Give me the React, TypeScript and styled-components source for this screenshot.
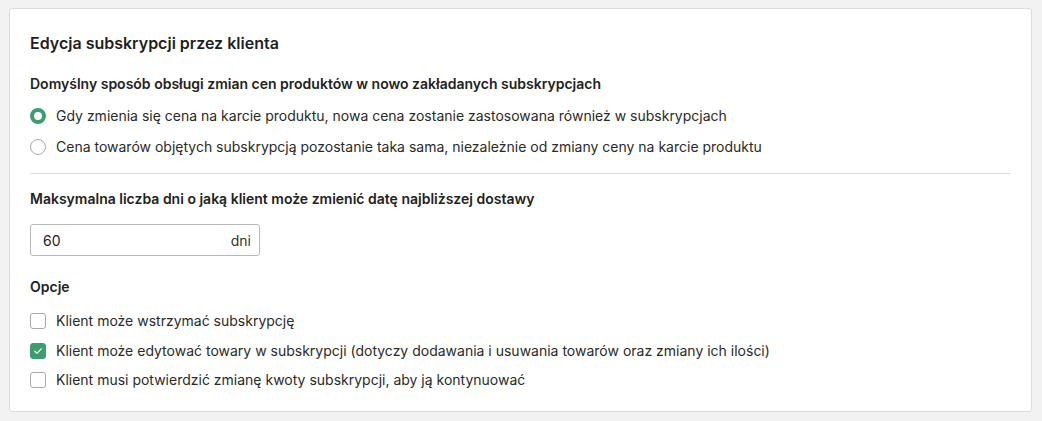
import styled, { createGlobalStyle } from "styled-components";

const GlobalStyle = createGlobalStyle`
  * { box-sizing: border-box; }
  body {
    margin: 0;
    background: #f2f2f2;
    font-family: "Inter", "Noto Sans", sans-serif;
    color: #222222;
  }
`;

const radioOptions = [
  "Gdy zmienia się cena na karcie produktu, nowa cena zostanie zastosowana również w subskrypcjach",
  "Cena towarów objętych subskrypcją pozostanie taka sama, niezależnie od zmiany ceny na karcie produktu",
];

const checkOptions = [
  { label: "Klient może wstrzymać subskrypcję", checked: false },
  {
    label:
      "Klient może edytować towary w subskrypcji (dotyczy dodawania i usuwania towarów oraz zmiany ich ilości)",
    checked: true,
  },
  { label: "Klient musi potwierdzić zmianę kwoty subskrypcji, aby ją kontynuować", checked: false },
];

const App = () => {
  return (
    <>
      <GlobalStyle />
      <Page>
        <Card>
          <Title>Edycja subskrypcji przez klienta</Title>

          <Section>
            <Label $space={12}>
              Domyślny sposób obsługi zmian cen produktów w nowo zakładanych subskrypcjach
            </Label>
            <List $gap={11}>
              {radioOptions.map((text, i) => (
                <Option key={text}>
                  <Radio $checked={i === 0} />
                  <span>{text}</span>
                </Option>
              ))}
            </List>
          </Section>

          <Divider />

          <Section>
            <Label $space={15}>
              Maksymalna liczba dni o jaką klient może zmienić datę najbliższej dostawy
            </Label>
            <InputBox>
              <span>60</span>
              <Suffix>dni</Suffix>
            </InputBox>
          </Section>

          <Section $top={21}>
            <Label $space={14}>Opcje</Label>
            <List $gap={9.5}>
              {checkOptions.map((opt) => (
                <Option key={opt.label}>
                  <Checkbox $checked={opt.checked}>
                    {opt.checked && (
                      <svg width="10" height="10" viewBox="0 0 10 10">
                        <path
                          d="M1.8 5.2 L4 7.3 L8.2 2.8"
                          fill="none"
                          stroke="#ffffff"
                          strokeWidth="1.2"
                          strokeLinecap="round"
                          strokeLinejoin="round"
                        />
                      </svg>
                    )}
                  </Checkbox>
                  <span>{opt.label}</span>
                </Option>
              ))}
            </List>
          </Section>
        </Card>
      </Page>
    </>
  );
};

export default App;

const Page = styled.div`
  padding: 8px 10px 11px 9px;
`;

const Card = styled.div`
  background: #ffffff;
  border: 1px solid #dcdcdc;
  border-radius: 3px;
  padding: 22px 20px 21px 20px;
`;

const Title = styled.h2`
  margin: 0 0 19px;
  font-size: 16px;
  line-height: 24px;
  font-weight: 600;
  color: #1f1f1f;
`;

const Section = styled.div<{ $top?: number }>`
  margin-top: ${(p) => p.$top ?? 0}px;
  display: flex;
  flex-direction: column;
`;

const Label = styled.div<{ $space: number }>`
  font-size: 14px;
  line-height: 20px;
  font-weight: 600;
  color: #222222;
  margin-bottom: ${(p) => p.$space}px;
`;

const List = styled.div<{ $gap: number }>`
  display: flex;
  flex-direction: column;
  gap: ${(p) => p.$gap}px;
`;

const Option = styled.label`
  display: flex;
  align-items: center;
  gap: 10px;
  font-size: 14px;
  line-height: 20px;
  color: #2a2a2a;
`;

const Radio = styled.span<{ $checked: boolean }>`
  flex: none;
  width: 16px;
  height: 16px;
  border-radius: 50%;
  background: #ffffff;
  border: ${(p) => (p.$checked ? "4.5px solid #3d9d6c" : "1px solid #a9a9a9")};
`;

const Checkbox = styled.span<{ $checked: boolean }>`
  flex: none;
  width: 16px;
  height: 16px;
  border-radius: 3px;
  display: flex;
  align-items: center;
  justify-content: center;
  background: ${(p) => (p.$checked ? "#3d9d6c" : "#ffffff")};
  border: 1px solid ${(p) => (p.$checked ? "#3d9d6c" : "#a9a9a9")};
`;

const Divider = styled.hr`
  border: none;
  border-top: 1px solid #dedede;
  margin: 16px 0 15px;
`;

const InputBox = styled.div`
  width: 230px;
  height: 32px;
  border: 1px solid #b8b8b8;
  border-radius: 3px;
  display: flex;
  align-items: center;
  justify-content: space-between;
  padding: 0 8px 0 12px;
  font-size: 14px;
  color: #222222;
`;

const Suffix = styled.span`
  color: #333333;
`;
